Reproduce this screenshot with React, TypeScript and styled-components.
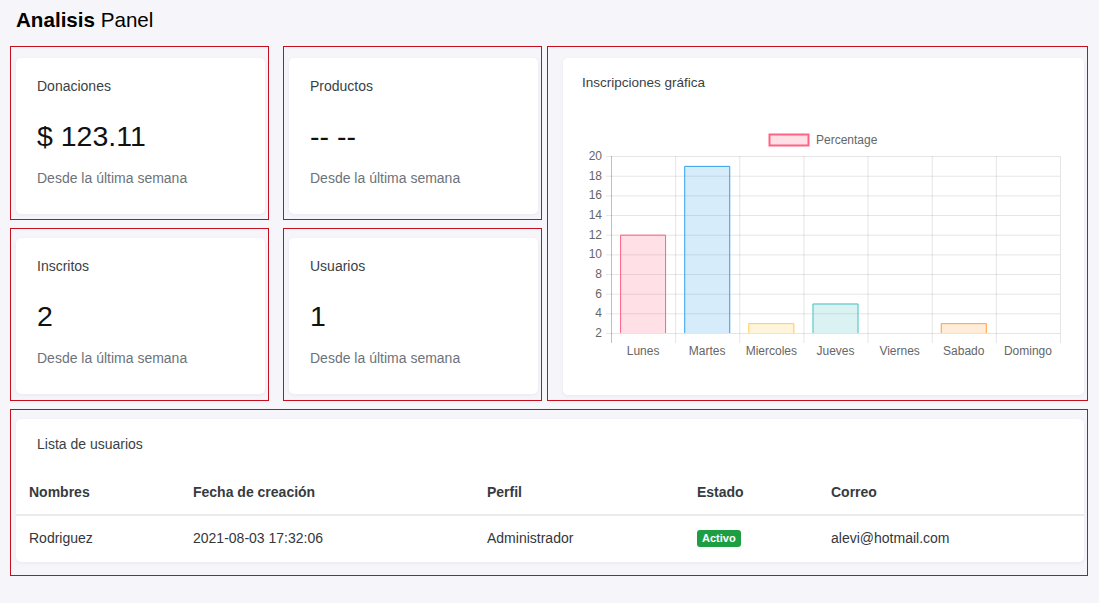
import React from 'react';
import styled, { createGlobalStyle } from 'styled-components';

const GlobalStyle = createGlobalStyle`
  html, body {
    margin: 0;
    padding: 0;
    background: #f5f5fa;
    font-family: 'Liberation Sans', Arial, sans-serif;
    color: #212529;
  }
`;

const Page = styled.div`
  width: 1099px;
  min-height: 603px;
  box-sizing: border-box;
  padding: 0 11px 0 10px;
`;

const Title = styled.h1`
  margin: 0 0 14px 6px;
  padding-top: 8px;
  font-size: 20.6px;
  line-height: 24px;
  font-weight: 400;
  color: #000;

  strong {
    font-weight: 700;
  }
`;

const TopRow = styled.div`
  display: flex;
  gap: 5px;
`;

const StatGrid = styled.div`
  display: grid;
  grid-template-columns: 259px 259px;
  grid-template-rows: 174px 173px;
  column-gap: 14px;
  row-gap: 8px;
`;

const Frame = styled.div<{ $pad: string; $width?: string }>`
  box-sizing: border-box;
  border: 1px solid #c50f1f;
  padding: ${({ $pad }) => $pad};
  width: ${({ $width }) => $width || 'auto'};
  display: flex;
  flex-direction: column;
`;

const Card = styled.div`
  flex: 1;
  background: #fff;
  border-radius: 5px;
  box-shadow: 0 1px 4px rgba(20, 20, 60, 0.06);
`;

const StatBody = styled.div`
  padding: 20px 21px 0;
`;

const StatLabel = styled.div`
  font-size: 14px;
  line-height: 17px;
  color: #3a3f45;
`;

const StatValue = styled.div`
  margin-top: 23px;
  font-size: 28.5px;
  line-height: 36px;
  color: #111;
`;

const StatNote = styled.div`
  margin-top: 16px;
  font-size: 14px;
  line-height: 17px;
  color: #6c737b;
`;

const ChartBody = styled.div`
  padding: 16px 19px 0;
`;

const CardTitle = styled.div`
  font-size: 13.5px;
  line-height: 17px;
  color: #3a3f45;
`;

const ChartSvg = styled.svg`
  display: block;
  margin-top: 35px;
  font-family: 'Liberation Sans', Arial, sans-serif;
`;

const TableFrameWrap = styled.div`
  margin-top: 8px;
`;

const TableBody = styled.div`
  padding-top: 17px;
`;

const TableTitle = styled(CardTitle)`
  padding-left: 21px;
  font-size: 14px;
`;

const Table = styled.table`
  width: 100%;
  margin-top: 17px;
  border-collapse: collapse;
  font-size: 14px;
  line-height: 17px;
`;

const Th = styled.th<{ $w?: number }>`
  width: ${({ $w }) => ($w ? `${$w}px` : 'auto')};
  box-sizing: border-box;
  text-align: left;
  font-weight: 700;
  color: #363b41;
  padding: 14px 13px 13px;
  border-bottom: 2px solid #e9ecef;
`;

const Td = styled.td`
  padding: 14px 13px 15px;
  color: #33373c;
`;

const Badge = styled.span`
  display: inline-block;
  background: #1d9e42;
  color: #fff;
  font-size: 11px;
  font-weight: 700;
  line-height: 13px;
  padding: 2px 5px;
  border-radius: 3px;
  vertical-align: 1px;
`;

const stats = [
  { label: 'Donaciones', value: '$ 123.11', pad: '11px 3px 5px 5px' },
  { label: 'Productos', value: '-- --', pad: '11px 3px 5px 5px' },
  { label: 'Inscritos', value: '2', pad: '9px 3px 6px 5px' },
  { label: 'Usuarios', value: '1', pad: '9px 3px 6px 5px' },
];

const bars = [
  { day: 'Lunes', value: 12, rgb: '255, 99, 132' },
  { day: 'Martes', value: 19, rgb: '54, 162, 235' },
  { day: 'Miercoles', value: 3, rgb: '255, 206, 86' },
  { day: 'Jueves', value: 5, rgb: '75, 192, 192' },
  { day: 'Viernes', value: 0, rgb: '153, 102, 255' },
  { day: 'Sabado', value: 3, rgb: '255, 159, 64' },
  { day: 'Domingo', value: 0, rgb: '201, 203, 207' },
];

const AXIS_X = 29;
const RIGHT_X = 478;
const BASE_Y = 207;
const UNIT = 9.83;
const COL = (RIGHT_X - AXIS_X) / 7;
const yOf = (v: number) => BASE_Y - (v - 2) * UNIT;
const GRID = 'rgba(0,0,0,0.1)';

const BarChart = () => {
  const ticks = [20, 18, 16, 14, 12, 10, 8, 6, 4, 2];
  return (
    <ChartSvg width={482} height={236} viewBox="0 0 482 236">
      <rect x={187.5} y={8.5} width={39} height={11} fill="rgba(255,99,132,0.2)" stroke="rgb(255,99,132)" strokeWidth={2} />
      <text x={234} y={18} fontSize={12} fill="#666">Percentage</text>

      {ticks.map((t) => (
        <g key={t}>
          <line x1={24} x2={RIGHT_X} y1={yOf(t) + 0.5} y2={yOf(t) + 0.5} stroke={GRID} />
          <text x={20} y={yOf(t) + 4} fontSize={12} fill="#666" textAnchor="end">{t}</text>
        </g>
      ))}

      {Array.from({ length: 8 }).map((_, i) => (
        <line
          key={i}
          x1={AXIS_X + i * COL + 0.5}
          x2={AXIS_X + i * COL + 0.5}
          y1={yOf(20)}
          y2={217}
          stroke={i === 0 ? 'rgba(0,0,0,0.25)' : GRID}
        />
      ))}

      {bars.map((b, i) => {
        const cx = AXIS_X + i * COL + COL / 2;
        const left = cx - 23;
        const right = cx + 23;
        const top = yOf(b.value);
        return (
          <g key={b.day}>
            {b.value > 2 && (
              <>
                <rect x={left} y={top} width={46} height={BASE_Y - top} fill={`rgba(${b.rgb},0.2)`} />
                <path
                  d={`M${left + 0.5} ${BASE_Y} V${top + 0.5} H${right - 0.5} V${BASE_Y}`}
                  fill="none"
                  stroke={`rgb(${b.rgb})`}
                  strokeWidth={1}
                />
              </>
            )}
            <text x={cx} y={229} fontSize={12} fill="#666" textAnchor="middle">{b.day}</text>
          </g>
        );
      })}
    </ChartSvg>
  );
};

interface IStatCardProps {
  label: string;
  value: string;
  pad: string;
}

const StatCard = ({ label, value, pad }: IStatCardProps) => (
  <Frame $pad={pad}>
    <Card>
      <StatBody>
        <StatLabel>{label}</StatLabel>
        <StatValue>{value}</StatValue>
        <StatNote>Desde la última semana</StatNote>
      </StatBody>
    </Card>
  </Frame>
);

const App = () => {
  return (
    <>
      <GlobalStyle />
      <Page>
        <Title>
          <strong>Analisis</strong> Panel
        </Title>
        <TopRow>
          <StatGrid>
            {stats.map((s) => (
              <StatCard key={s.label} label={s.label} value={s.value} pad={s.pad} />
            ))}
          </StatGrid>
          <Frame $pad="11px 3px 5px 15px" $width="541px">
            <Card>
              <ChartBody>
                <CardTitle>Inscripciones gráfica</CardTitle>
                <BarChart />
              </ChartBody>
            </Card>
          </Frame>
        </TopRow>
        <TableFrameWrap>
          <Frame $pad="9px 3px 13px 5px">
            <Card>
              <TableBody>
                <TableTitle>Lista de usuarios</TableTitle>
                <Table>
                  <thead>
                    <tr>
                      <Th $w={164}>Nombres</Th>
                      <Th $w={294}>Fecha de creación</Th>
                      <Th $w={210}>Perfil</Th>
                      <Th $w={134}>Estado</Th>
                      <Th>Correo</Th>
                    </tr>
                  </thead>
                  <tbody>
                    <tr>
                      <Td>Rodriguez</Td>
                      <Td>2021-08-03 17:32:06</Td>
                      <Td>Administrador</Td>
                      <Td>
                        <Badge>Activo</Badge>
                      </Td>
                      <Td>alevi@hotmail.com</Td>
                    </tr>
                  </tbody>
                </Table>
              </TableBody>
            </Card>
          </Frame>
        </TableFrameWrap>
      </Page>
    </>
  );
};

export default App;
